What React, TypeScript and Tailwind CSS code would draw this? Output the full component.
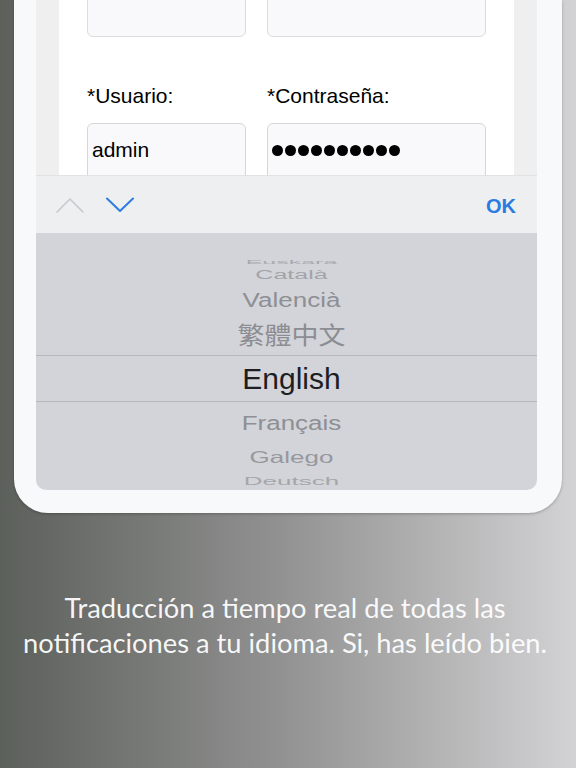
import React from "react";

const pickerItems = {
  above: [
    { label: "Euskara", h: "h-[10px]", size: "text-[25px]", scale: "scale-y-[0.18]", color: "text-[#a9aaaf]" },
    { label: "Català", h: "h-[15px]", size: "text-[25px]", scale: "scale-y-[0.5]", color: "text-[#a3a4a9]" },
    { label: "Valencià", h: "h-[36px]", size: "text-[26px]", scale: "scale-y-[0.75]", color: "text-[#8e8f94]" },
    { label: "繁體中文", h: "h-[37px]", size: "text-[27px]", scale: "scale-y-[0.9]", color: "text-[#8c8d92]" },
  ],
  below: [
    { label: "Français", h: "h-[41px]", size: "text-[26px]", scale: "scale-y-[0.8]", color: "text-[#8e8f94]" },
    { label: "Galego", h: "h-[28px]", size: "text-[26px]", scale: "scale-y-[0.65]", color: "text-[#97989d]" },
    { label: "Deutsch", h: "h-[20px]", size: "text-[26px]", scale: "scale-y-[0.45]", color: "text-[#a5a6ab]" },
  ],
};

type Item = (typeof pickerItems.above)[number];

const PickerRow: React.FC<{ item: Item }> = ({ item }) => (
  <div className={`${item.h} flex items-center justify-center`}>
    <span className={`inline-block leading-none ${item.size} ${item.scale} ${item.color}`}>
      {item.label}
    </span>
  </div>
);

const App: React.FC = () => {
  return (
    <div
      className="w-[576px] h-[768px] overflow-hidden bg-gradient-to-r from-[#5c605b] via-[#939393] to-[#d3d3d5]"
      style={{ fontFamily: '"Liberation Sans", "Noto Sans CJK TC", sans-serif' }}
    >
      {/* device frame */}
      <div className="px-[14px]">
        <div className="h-[513px] bg-[#f8f9fb] rounded-b-[34px] pl-[22px] pr-[25px] pb-[23px] shadow-[0_1px_3px_rgba(0,0,0,0.25)]">
          <div className="h-full rounded-b-[10px] overflow-hidden flex flex-col">
            {/* web form */}
            <div className="h-[175px] bg-[#efefef] px-[23px] flex">
              <div className="flex-1 bg-white overflow-hidden pl-[28px]">
                <div className="flex gap-[21px] -mt-[20px]">
                  <div className="w-[159px] h-[57px] rounded-[6px] border border-[#dcdcdf] bg-[#f9f9fb]" />
                  <div className="w-[219px] h-[57px] rounded-[6px] border border-[#dcdcdf] bg-[#f9f9fb]" />
                </div>
                <div className="flex gap-[21px] mt-[47px] text-[21px] leading-[24px] text-black">
                  <div className="w-[159px]">*Usuario:</div>
                  <div className="w-[219px]">*Contraseña:</div>
                </div>
                <div className="flex gap-[21px] mt-[15px]">
                  <div className="w-[159px] h-[70px] rounded-[6px] border border-[#d6d6d9] bg-[#f9f9fb] pt-[14px] pl-[4px] text-[21px] leading-[24px] text-black">
                    admin
                  </div>
                  <div className="w-[219px] h-[70px] rounded-[6px] border border-[#d6d6d9] bg-[#f9f9fb] pt-[14px] pl-[4px]">
                    <div className="h-[24px] flex items-center gap-[2px]">
                      {Array.from({ length: 10 }).map((_, i) => (
                        <span key={i} className="w-[11px] h-[11px] rounded-full bg-black" />
                      ))}
                    </div>
                  </div>
                </div>
              </div>
            </div>

            {/* keyboard accessory bar */}
            <div className="h-[58px] bg-[#eeeff1] border-t border-[#e2e2e4] flex items-center pl-[20px] pr-[21px]">
              <svg width="28" height="16" viewBox="0 0 28 16" fill="none" className="mt-[1px]">
                <polyline points="1,15 14,2 27,15" stroke="#c9c9cd" strokeWidth="1.6" strokeLinecap="round" strokeLinejoin="round" />
              </svg>
              <svg width="28" height="16" viewBox="0 0 28 16" fill="none" className="ml-[22px] mt-[1px]">
                <polyline points="1,1.5 14,14 27,1.5" stroke="#2f7ce0" strokeWidth="2" strokeLinecap="round" strokeLinejoin="round" />
              </svg>
              <span className="ml-auto text-[20px] font-bold text-[#2c7be0] leading-none mt-[3px]">OK</span>
            </div>

            {/* language picker wheel */}
            <div className="flex-1 bg-[#d2d4d9] pt-[24px] overflow-hidden">
              {pickerItems.above.map((item) => (
                <div key={item.label} className="pl-[10px]">
                  <PickerRow item={item} />
                </div>
              ))}
              <div className="h-[47px] border-y border-[#b7b8bd] flex items-center justify-center pl-[10px]">
                <span className="text-[30px] leading-none text-[#1d1d22]">English</span>
              </div>
              {pickerItems.below.map((item) => (
                <div key={item.label} className="pl-[10px]">
                  <PickerRow item={item} />
                </div>
              ))}
            </div>
          </div>
        </div>
      </div>

      {/* caption */}
      <p
        className="mt-[77px] pr-[6px] text-center text-[27.3px] leading-[35px] text-white/95"
        style={{ fontFamily: 'Lato, "Open Sans", sans-serif' }}
      >
        Traducción a tiempo real de todas las
        <br />
        notificaciones a tu idioma. Si, has leído bien.
      </p>
    </div>
  );
};

export default App;
